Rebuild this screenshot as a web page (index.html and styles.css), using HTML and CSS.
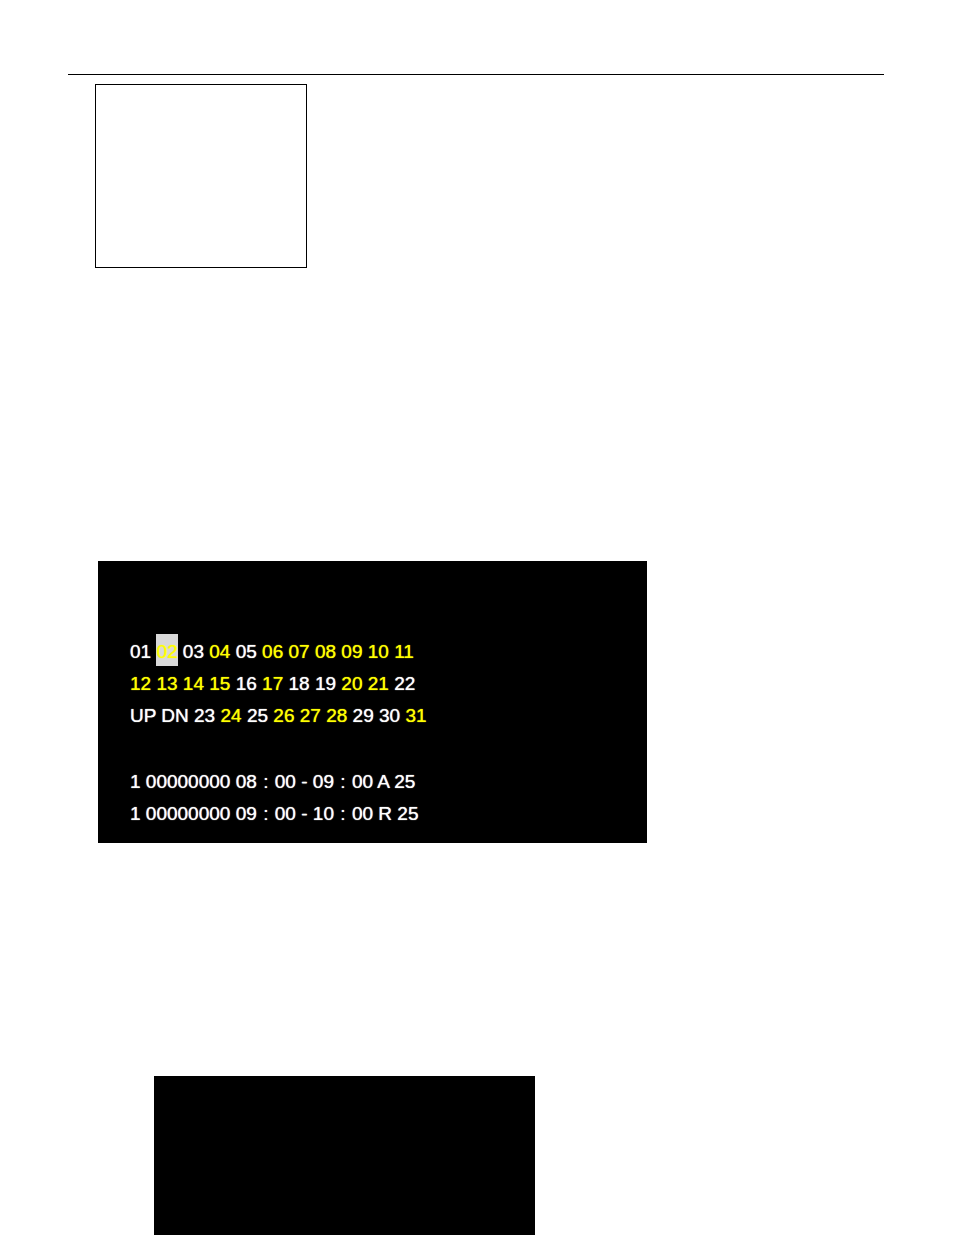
FILE: index.html
```html
<!DOCTYPE html>
<html lang="en">
<head>
<meta charset="utf-8">
<title>Schedule</title>
<link rel="stylesheet" href="styles.css">
</head>
<body>
<main class="page">
<hr class="rule">
<div class="frame"></div>
<section class="screen">
<p class="line">01 <mark class="cursor">02</mark> 03 <b class="on">04</b> 05 <b class="on">06 07 08 09 10 11</b></p>
<p class="line"><b class="on">12 13 14 15</b> 16 <b class="on">17</b> 18 19 <b class="on">20 21</b> 22</p>
<p class="line">UP DN 23 <b class="on">24</b> 25 <b class="on">26 27 28</b> 29 30 <b class="on">31</b></p>
<p class="line entry">1 00000000 08<span class="colon">:</span>00 - 09<span class="colon">:</span>00 A 25</p>
<p class="line">1 00000000 09<span class="colon">:</span>00 - 10<span class="colon">:</span>00 R 25</p>
</section>
<div class="panel"></div>
</main>
</body>
</html>
```
FILE: styles.css
```css
* {
  box-sizing: border-box;
}

body {
  margin: 0;
  background: #fff;
  font-family: "Liberation Sans", Arial, sans-serif;
}

.page {
  display: flex;
  flex-direction: column;
  align-items: flex-start;
  padding: 74px 70px 0 68px;
}

.rule {
  width: 100%;
  margin: 0;
  border: 0;
  border-top: 1px solid #000;
}

.frame {
  width: 26%;
  height: 184px;
  margin: 9px 0 0 27px;
  border: 1px solid #000;
}

.screen {
  width: 549px;
  max-width: 100%;
  margin: 293px 0 0 30px;
  padding: 75px 32px 13px;
  background: #000;
  color: #fff;
}

.line {
  margin: 0;
  font-size: 19px;
  line-height: 32px;
  white-space: nowrap;
  text-shadow: 0 0 1px currentColor;
}

.entry {
  margin-top: 34px;
}

.on {
  color: #ff0;
  font-weight: normal;
}

.cursor {
  padding: 7px 0 4px;
  background: #d9d9d9;
  color: #ff0;
}

.colon {
  display: inline-block;
  width: 18px;
  text-align: center;
}

.panel {
  width: 381px;
  max-width: 100%;
  height: 159px;
  margin: 233px 0 0 86px;
  background: #000;
}
```
